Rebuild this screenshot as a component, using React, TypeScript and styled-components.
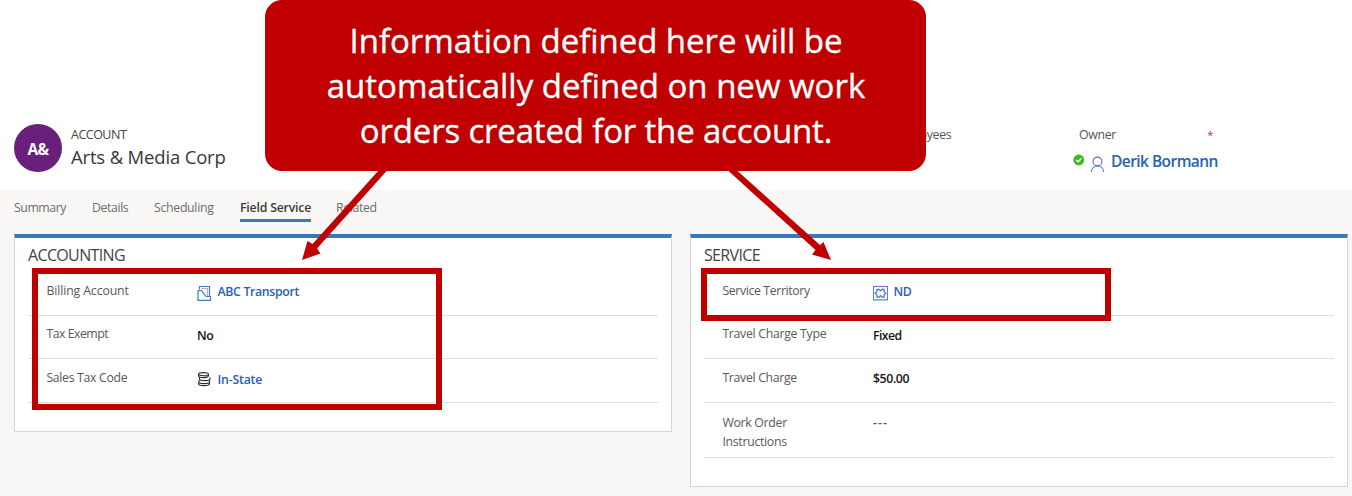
import React from 'react';
import styled, { createGlobalStyle } from 'styled-components';

const Global = createGlobalStyle`
  * { box-sizing: border-box; }
  body { margin: 0; background: #f8f7f6; font-family: "Open Sans", "Noto Sans", sans-serif; }
`;

const Page = styled.div`
  position: relative;
  width: 1352px;
  height: 496px;
  overflow: hidden;
  background: #f8f7f6;
`;

const Header = styled.header`
  display: flex;
  height: 190px;
  padding: 124px 0 0 14px;
  background: #fff;
`;

const Avatar = styled.div`
  display: flex;
  align-items: center;
  justify-content: center;
  width: 48px;
  height: 48px;
  border-radius: 50%;
  background: #6b1f7c;
  color: #fff;
  font-size: 15.5px;
  font-weight: 700;
  letter-spacing: -0.7px;
  padding-top: 2px;
`;

const Identity = styled.div`
  width: 824px;
  padding-left: 9px;
`;

const EntityType = styled.div`
  padding-top: 1px;
  font-size: 12.5px;
  line-height: 20px;
  letter-spacing: -0.5px;
  color: #454340;
`;

const EntityName = styled.h1`
  margin: 0;
  font-size: 18.5px;
  font-weight: 400;
  line-height: 24px;
  letter-spacing: -0.17px;
  color: #3a3836;
`;

const HeaderField = styled.div<{ $width: number }>`
  width: ${(p) => p.$width}px;
`;

const FieldName = styled.div`
  display: flex;
  justify-content: space-between;
  padding: 1px 0 0 6px;
  font-size: 12.3px;
  line-height: 20px;
  letter-spacing: -0.3px;
  color: #555351;
`;

const Required = styled.span`
  font-size: 11px;
  color: #e8211c;
`;

const Owner = styled.div`
  display: flex;
  margin-top: 4px;
  height: 24px;
`;

const OwnerName = styled.span`
  margin-left: 6px;
  font-size: 15.5px;
  font-weight: 600;
  line-height: 24px;
  letter-spacing: -0.55px;
  color: #2461b4;
  white-space: nowrap;
`;

const Tabs = styled.nav`
  display: flex;
  height: 44px;
  padding: 7px 0 0 14px;
`;

const Tab = styled.div<{ $width: number; $track: number; $active?: boolean }>`
  width: ${(p) => p.$width}px;
  height: 25px;
  margin-right: 25px;
  border-bottom: ${(p) => (p.$active ? '3.5px solid #3a78b9' : 'none')};
  font-size: 12.3px;
  font-weight: ${(p) => (p.$active ? 600 : 400)};
  line-height: 21px;
  letter-spacing: ${(p) => p.$track}px;
  color: ${(p) => (p.$active ? '#3b3a39' : '#6f6d6b')};
  white-space: nowrap;
`;

const Panels = styled.main`
  display: flex;
  align-items: flex-start;
  gap: 18px;
  padding-left: 14px;
`;

const Card = styled.section<{ $height: number }>`
  width: 658px;
  height: ${(p) => p.$height}px;
  padding: 0 13px;
  border: 1px solid #d6d5d4;
  border-top: 4px solid #3a78b9;
  background: #fff;
`;

const CardTitle = styled.h2`
  height: 34px;
  margin: 0;
  font-size: 16px;
  font-weight: 400;
  line-height: 35px;
  letter-spacing: -0.65px;
  color: #454341;
`;

const Row = styled.div<{ $height: number; $top: number }>`
  display: flex;
  height: ${(p) => p.$height}px;
  padding: ${(p) => p.$top}px 0 0 18.4px;
  border-bottom: 1px solid #dededd;
`;

const Label = styled.div<{ $track: number }>`
  width: 150.6px;
  font-size: 12.3px;
  line-height: 19px;
  letter-spacing: ${(p) => p.$track}px;
  color: #5a5856;
  white-space: pre-line;
`;

const Value = styled.div<{ $tone: 'link' | 'text' | 'muted'; $track: number; $drop: number }>`
  display: flex;
  align-items: flex-start;
  height: 19px;
  margin-top: ${(p) => p.$drop}px;
  gap: 5.5px;
  font-size: 12.3px;
  font-weight: 600;
  line-height: 19px;
  letter-spacing: ${(p) => p.$track}px;
  color: ${(p) => ({ link: '#2461b4', text: '#161514', muted: '#5a5856' })[p.$tone]};
`;

const Callout = styled.div`
  position: absolute;
  left: 265px;
  top: 0;
  width: 661px;
  height: 171px;
  padding: 18px 0 0 1px;
  border-radius: 17px;
  background: #c00000;
  color: #fff;
  text-align: center;
  -webkit-text-stroke: 0.35px #fff;
`;

const CalloutLine = styled.div<{ $track: number }>`
  font-size: 33px;
  line-height: 45px;
  letter-spacing: ${(p) => p.$track}px;
`;

const Highlight = styled.div<{ $x: number; $height: number }>`
  position: absolute;
  left: ${(p) => p.$x}px;
  top: 268px;
  width: 410px;
  height: ${(p) => p.$height}px;
  border: 6px solid #c00000;
`;

const Arrows = styled.svg`
  position: absolute;
  left: 0;
  top: 0;
`;

const Glyph = styled.svg`
  flex: none;
  display: block;
`;

const AccountIcon = () => (
  <Glyph width="15" height="19" viewBox="0 0 15 19" fill="none" stroke="#3f78c6" strokeWidth="1.2">
    <path d="M2.5 7.5V4.5H12.5V14" />
    <path d="M1 8.5H4.5L9 14.5H13.5V18.3H1Z" />
    <path d="M4.5 6.5H10.5V14" stroke="#c3a6b8" />
  </Glyph>
);

const CoinsIcon = () => (
  <Glyph width="15" height="19" viewBox="0 0 15 19" fill="none" stroke="#2b2b2b" strokeWidth="1.1">
    <ellipse cx="6.5" cy="4.2" rx="5" ry="1.6" />
    <path d="M1.5 4.2V5.7C1.5 8.2 11.5 8.2 11.5 5.7V4.2" />
    <path d="M2.5 7.2V9C2.5 11.2 13 11.2 13 9V7.2" />
    <path d="M2 10V12C2 14.2 12.5 14.2 12.5 12V10" />
    <path d="M1.5 12.5V13.7C1.5 16.2 12.5 16.2 12.5 13.7V12.2" />
  </Glyph>
);

const TerritoryIcon = () => (
  <Glyph width="15" height="19" viewBox="0 0 15 19" fill="none" stroke="#3f6fbd" strokeWidth="1.2">
    <rect x="0.5" y="4.5" width="14" height="13.4" stroke="#5b84c6" />
    <path d="M4 7.3H6L7.5 8.8L9 7.3H11V9.2L12.7 11.2L11 13.2V15.1H9L7.5 13.6L6 15.1H4V13.2L2.3 11.2L4 9.2Z" />
  </Glyph>
);

const icons = { account: AccountIcon, coins: CoinsIcon, territory: TerritoryIcon };

type Field = {
  label: string;
  value: string;
  tone: 'link' | 'text' | 'muted';
  height: number;
  top: number;
  drop: number;
  track: number;
  valueTrack: number;
  icon?: keyof typeof icons;
};

const accounting: Field[] = [
  { label: 'Billing Account', value: 'ABC Transport', tone: 'link', icon: 'account', height: 44, top: 9, drop: 1, track: -0.12, valueTrack: -0.32 },
  { label: 'Tax Exempt', value: 'No', tone: 'text', height: 43, top: 8, drop: 2, track: -0.5, valueTrack: -0.3 },
  { label: 'Sales Tax Code', value: 'In-State', tone: 'link', icon: 'coins', height: 44, top: 9, drop: 2, track: -0.32, valueTrack: -0.2 },
];

const service: Field[] = [
  { label: 'Service Territory', value: 'ND', tone: 'link', icon: 'territory', height: 44, top: 9, drop: 1, track: -0.37, valueTrack: -0.4 },
  { label: 'Travel Charge Type', value: 'Fixed', tone: 'text', height: 43, top: 8, drop: 2, track: -0.3, valueTrack: -0.6 },
  { label: 'Travel Charge', value: '$50.00', tone: 'text', height: 44, top: 9, drop: 1, track: -0.32, valueTrack: -0.4 },
  { label: 'Work Order\nInstructions', value: '---', tone: 'muted', height: 55, top: 10, drop: 0, track: -0.3, valueTrack: 1 },
];

const Panel = ({ title, height, fields }: { title: string; height: number; fields: Field[] }) => (
  <Card $height={height}>
    <CardTitle>{title}</CardTitle>
    {fields.map((f) => {
      const Icon = f.icon && icons[f.icon];
      return (
        <Row key={f.label} $height={f.height} $top={f.top}>
          <Label $track={f.track}>{f.label}</Label>
          <Value $tone={f.tone} $track={f.valueTrack} $drop={f.drop}>
            {Icon && <Icon />}
            <span>{f.value}</span>
          </Value>
        </Row>
      );
    })}
  </Card>
);

export default function App() {
  return (
    <Page>
      <Global />
      <Header>
        <Avatar>A&amp;</Avatar>
        <Identity>
          <EntityType>ACCOUNT</EntityType>
          <EntityName>Arts &amp; Media Corp</EntityName>
        </Identity>
        <HeaderField $width={187}>
          <FieldName>Employees</FieldName>
        </HeaderField>
        <HeaderField $width={140}>
          <FieldName>
            Owner<Required>*</Required>
          </FieldName>
          <Owner>
            <Glyph width="12" height="24" viewBox="0 0 12 24">
              <circle cx="5.8" cy="11" r="5.4" fill="#41b922" />
              <path d="M3.3 11.1L5.2 12.8L8.4 9.4" fill="none" stroke="#fff" strokeWidth="1.5" />
            </Glyph>
            <Glyph width="20" height="24" viewBox="0 0 20 24" fill="none" stroke="#5474c0" strokeWidth="1.1">
              <circle cx="12.5" cy="12.5" r="4.4" />
              <path d="M6.3 23C7 15 18 15 18.7 23" />
            </Glyph>
            <OwnerName>Derik Bormann</OwnerName>
          </Owner>
        </HeaderField>
      </Header>
      <Tabs>
        <Tab $width={53} $track={-0.45}>Summary</Tab>
        <Tab $width={37} $track={-0.4}>Details</Tab>
        <Tab $width={61} $track={-0.3}>Scheduling</Tab>
        <Tab $width={71} $track={-0.2} $active>Field Service</Tab>
        <Tab $width={42} $track={-0.35}>Related</Tab>
      </Tabs>
      <Panels>
        <Panel title="ACCOUNTING" height={198} fields={accounting} />
        <Panel title="SERVICE" height={253} fields={service} />
      </Panels>
      <Highlight $x={32} $height={142} />
      <Highlight $x={701} $height={53} />
      <Arrows width="1352" height="300" viewBox="0 0 1352 300" fill="#c00000">
        <path d="M379 170L387.5 170L317 248.5L320.5 253.5L302 260L307.5 241L312.5 244Z" />
        <path d="M727.5 170L736.5 170L820 245L823.5 242L831 260L812 254.5L815.5 250Z" />
      </Arrows>
      <Callout>
        <CalloutLine $track={-0.05}>Information defined here will be</CalloutLine>
        <CalloutLine $track={0}>automatically defined on new work</CalloutLine>
        <CalloutLine $track={-0.18}>orders created for the account.</CalloutLine>
      </Callout>
    </Page>
  );
}
